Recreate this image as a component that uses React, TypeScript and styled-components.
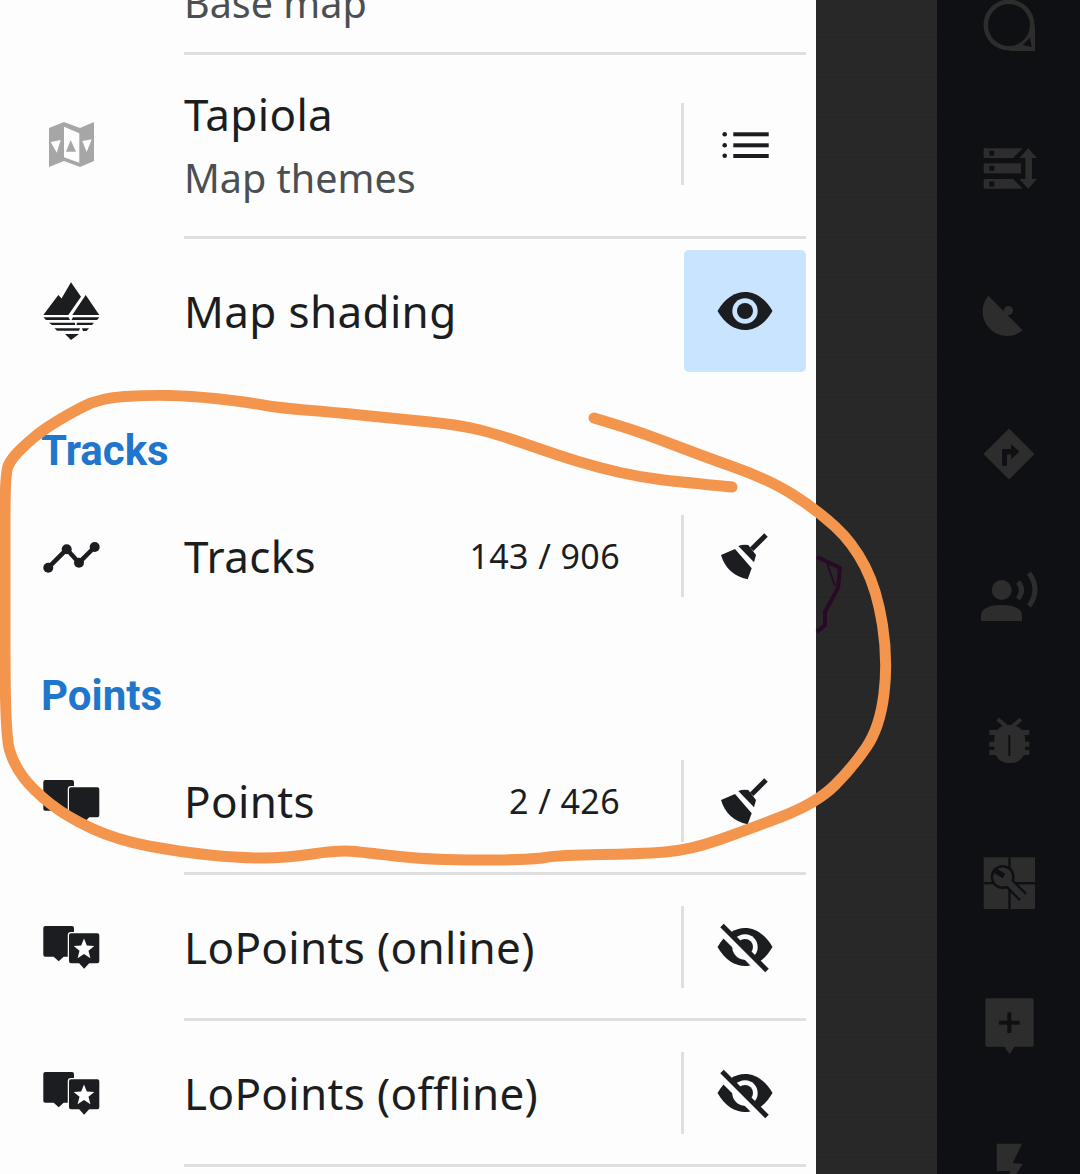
import React from 'react';
import styled, { createGlobalStyle } from 'styled-components';

const GlobalStyle = createGlobalStyle`
  html, body {
    margin: 0;
    padding: 0;
    background: #0e1013;
  }
`;

const Screen = styled.div`
  position: relative;
  display: flex;
  width: 1080px;
  height: 1174px;
  overflow: hidden;
  font-family: 'Noto Sans', sans-serif;
`;

const Panel = styled.div`
  display: flex;
  flex-direction: column;
  flex: none;
  width: 816px;
  background: #fdfdfd;
  color: #1b1d20;
`;

const MapStrip = styled.div`
  flex: none;
  width: 121px;
  background-color: #282828;
  background-image: linear-gradient(rgba(0, 0, 0, 0.08) 1px, transparent 1px);
  background-position: 0 37px;
  background-size: 100% 40px;
`;

const Rail = styled.div`
  display: flex;
  flex-direction: column;
  flex: 1;
  align-items: center;
  margin-top: -47px;
  background: #0e1013;
`;

const RailCell = styled.div`
  display: flex;
  flex: none;
  align-items: center;
  justify-content: center;
  height: 143px;
`;

const Row = styled.div<{ $height?: number }>`
  display: flex;
  flex: none;
  height: ${(p) => p.$height ?? 146}px;
`;

const TopRow = styled(Row)`
  margin-top: -5px;
`;

const IconCell = styled.div<{ $bottom?: number }>`
  display: flex;
  flex: none;
  align-items: center;
  justify-content: center;
  width: 144px;
  margin-right: 40px;
  padding-bottom: ${(p) => p.$bottom ?? 0}px;
`;

const Body = styled.div<{ $divider?: boolean; $bottom?: number; $end?: boolean }>`
  display: flex;
  flex: 1;
  align-items: ${(p) => (p.$end ? 'flex-end' : 'center')};
  margin-right: 10px;
  padding-bottom: ${(p) => p.$bottom ?? 2}px;
  box-shadow: ${(p) => (p.$divider ? 'inset 0 -3px 0 #dfdfdf' : 'none')};
`;

const TextBlock = styled.div`
  display: flex;
  flex: 1;
  flex-direction: column;
  min-width: 0;
`;

const TwoLines = styled(TextBlock)`
  padding-top: 4px;
`;

const Title = styled.div`
  font-size: 44px;
  line-height: 64px;
  letter-spacing: 0.35px;
  white-space: nowrap;
`;

const Sub = styled.div`
  color: #4b4f53;
  font-size: 39.5px;
  line-height: 64px;
  white-space: nowrap;
`;

const Count = styled.div`
  margin-right: 61px;
  font-size: 34px;
  line-height: 64px;
  letter-spacing: 0.4px;
  white-space: nowrap;
`;

const Separator = styled.div`
  flex: none;
  width: 3px;
  height: 82px;
  background: #dfdfdf;
`;

const ActionButton = styled.button<{ $active?: boolean }>`
  display: flex;
  flex: none;
  align-items: center;
  justify-content: center;
  width: 122px;
  height: 122px;
  padding: 0;
  border: none;
  border-radius: 5px;
  background: ${(p) => (p.$active ? '#c9e4fe' : 'transparent')};
`;

const SectionHeader = styled.div<{ $height: number }>`
  display: flex;
  flex: none;
  align-items: flex-end;
  height: ${(p) => p.$height}px;
  box-sizing: border-box;
  padding: 0 0 9px 41px;
  color: #1f76cc;
  font-family: 'Roboto', sans-serif;
  font-size: 42px;
  font-weight: 700;
  line-height: 48px;
`;

const Annotation = styled.svg`
  position: absolute;
  top: 0;
  left: 0;
  pointer-events: none;
`;

const INK = '#1b1d20';
const RAIL_INK = '#2d2d2d';
const RAIL_BG = '#0e1013';

const Icon: React.FC<{ children: React.ReactNode }> = ({ children }) => (
  <svg width={60} height={60} viewBox="0 0 60 60">
    {children}
  </svg>
);

const FoldedMapIcon = () => (
  <Icon>
    <g transform="translate(2 2)">
      <polygon points="5,12 20,6 36,12 50,6 50,45 36,51 20,45 5,51" fill="#a6a6a6" />
      <polygon points="20,10.7 35.3,17.3 35.3,46.7 20,41.3" fill="#fdfdfd" />
      <polygon points="26.7,24 22,35.7 32,35.7" fill="#a6a6a6" />
      <polygon points="6.7,26 16.7,24 12.7,36.7" fill="#fdfdfd" />
      <polygon points="38.3,25 47.7,23.3 42.7,36" fill="#fdfdfd" />
    </g>
  </Icon>
);

const ShadingIcon = () => (
  <Icon>
    <polygon points="1.3,34 16.3,14 19.5,17.5 29,1.3 39,15.7 26.3,34" fill={INK} />
    <polygon points="43.7,14 57.3,34 30.3,34" fill={INK} />
    <polygon points="1.5,36.3 26.5,36.3 28,39 4,39" fill={INK} />
    <polygon points="31,36.3 57.5,36.3 55,39 29.5,39" fill={INK} />
    <polygon points="7,41.7 33,41.7 33,44 10,44" fill={INK} />
    <polygon points="35,41.7 52,41.7 50,44 34.5,44" fill={INK} />
    <polygon points="12.5,47.3 38,47.3 37,49.8 15,49.8" fill={INK} />
    <polygon points="40,47.3 47,47.3 44.5,50 41,50" fill={INK} />
    <polygon points="23,53 37,53 29,59" fill={INK} />
  </Icon>
);

const TrackIcon = () => (
  <Icon>
    <polyline points="6.3,40.7 24.7,22.3 37,35.7 52.7,20" fill="none" stroke={INK} strokeWidth={4.5} />
    <circle cx={6.3} cy={40.7} r={5} fill={INK} />
    <circle cx={24.7} cy={22.3} r={5} fill={INK} />
    <circle cx={37} cy={35.7} r={5} fill={INK} />
    <circle cx={52.7} cy={20} r={5} fill={INK} />
  </Icon>
);

const markerPath = (x: number, y: number, w: number, h: number, tip: number) =>
  `M${x + 2} ${y}H${x + w - 2}Q${x + w} ${y} ${x + w} ${y + 2}V${y + h - 2}Q${x + w} ${y + h} ${x + w - 2} ${y + h}` +
  `H${x + w / 2 + 5}L${x + w / 2} ${y + h + tip}L${x + w / 2 - 5} ${y + h}H${x + 2}Q${x} ${y + h} ${x} ${y + h - 2}V${y + 2}Q${x} ${y} ${x + 2} ${y}Z`;

const PointsIcon: React.FC<{ star?: boolean }> = ({ star }) => (
  <Icon>
    <path d={markerPath(1.3, 8, 30.7, 30.7, 4.5)} fill={INK} />
    <path d={markerPath(27, 15.3, 30.3, 30, 5.5)} fill={INK} stroke="#fdfdfd" strokeWidth={2.5} paintOrder="stroke" />
    {star && (
      <polygon
        points="42,20.5 44.8,27.6 52.3,28 46.5,32.8 48.4,40.2 42,36 35.6,40.2 37.5,32.8 31.7,28 39.2,27.6"
        fill="#fdfdfd"
      />
    )}
  </Icon>
);

const BroomIcon = () => (
  <Icon>
    <g transform="translate(0 1)">
      <line x1={51} y1={8} x2={36.7} y2={22.3} stroke={INK} strokeWidth={5} />
      <path d="M23.3 19Q28 17 33.3 18L41 28L39 35.3Z" fill={INK} />
      <path d="M6 28L20 22L36.7 41.3L32.7 52.3Q12 48 6 28Z" fill={INK} />
    </g>
  </Icon>
);

const ListIcon = () => (
  <Icon>
    <circle cx={9.7} cy={20.2} r={2.3} fill={INK} />
    <circle cx={9.7} cy={31.2} r={2.3} fill={INK} />
    <circle cx={9.7} cy={41.8} r={2.3} fill={INK} />
    <rect x={18.3} y={18.3} width={35.4} height={4} fill={INK} />
    <rect x={18.3} y={29.3} width={35.4} height={4} fill={INK} />
    <rect x={18.3} y={40} width={35.4} height={4} fill={INK} />
  </Icon>
);

const EYE_PATH = 'M2.5 30C10 17 20 11 30 11S50 17 57.5 30C50 43 40 49 30 49S10 43 2.5 30Z';

const EyeIcon = () => (
  <Icon>
    <path d={EYE_PATH} fill={INK} />
    <circle cx={30} cy={30} r={12.7} fill="#c9e4fe" />
    <circle cx={30} cy={30} r={8} fill={INK} />
  </Icon>
);

const EyeOffIcon = () => (
  <Icon>
    <path d={EYE_PATH} fill={INK} />
    <circle cx={30} cy={30} r={12.7} fill="#fdfdfd" />
    <circle cx={30} cy={30} r={8} fill={INK} />
    <line x1={5} y1={11} x2={50} y2={56} stroke="#fdfdfd" strokeWidth={10} />
    <line x1={7} y1={8.5} x2={52} y2={53.5} stroke={INK} strokeWidth={5} />
  </Icon>
);

const BubbleIcon = () => (
  <Icon>
    <circle cx={30} cy={30} r={25.5} fill={RAIL_INK} />
    <polygon points="30,56 56,56 56,30" fill={RAIL_INK} />
    <circle cx={30} cy={30} r={21} fill={RAIL_BG} />
    <polygon points="43.7,50 51,42.6 52.7,52" fill={RAIL_BG} />
  </Icon>
);

const StackIcon = () => (
  <Icon>
    <polygon points="4.7,10.3 43.7,10.3 34,20 4.7,20" fill={RAIL_INK} />
    <rect x={4.7} y={25.3} width={37.3} height={10} fill={RAIL_INK} />
    <polygon points="4.7,41 34,41 43.7,50.7 4.7,50.7" fill={RAIL_INK} />
    <rect x={10.3} y={12.7} width={5} height={5} fill={RAIL_BG} />
    <rect x={10.3} y={27.8} width={5} height={5} fill={RAIL_BG} />
    <rect x={10.3} y={43.5} width={5} height={5} fill={RAIL_BG} />
    <polygon points="49.3,10.3 58,20 53,20 53,41 58,41 49.3,50.7 40.3,41 46.3,41 46.3,20 40.3,20" fill={RAIL_INK} />
  </Icon>
);

const DishIcon = () => (
  <Icon>
    <path d="M9.3 14.7L43.7 49.3A24.5 24.5 0 0 1 9.3 14.7Z" fill={RAIL_INK} />
    <circle cx={29.5} cy={29.5} r={4.5} fill={RAIL_INK} />
  </Icon>
);

const RouteIcon = () => (
  <Icon>
    <polygon points="30,4.5 55.5,30 30,55.5 4.5,30" fill={RAIL_INK} />
    <polygon points="23,41.7 23,25 32,25 32,20 40.3,27.7 32,35.3 32,30.5 28,30.5 28,41.7" fill={RAIL_BG} />
  </Icon>
);

const PersonIcon = () => (
  <Icon>
    <circle cx={22.7} cy={23} r={10} fill={RAIL_INK} />
    <path d="M2 54V48C2 41 12 38 22.7 38S43 41 43 48V54Z" fill={RAIL_INK} />
    <path d="M39 15Q46 23 39 32" fill="none" stroke={RAIL_INK} strokeWidth={5} />
    <path d="M50 6Q62 23 50 39" fill="none" stroke={RAIL_INK} strokeWidth={5} />
  </Icon>
);

const BugIcon = () => (
  <Icon>
    <rect x={15.3} y={15} width={30.7} height={38} rx={14} fill={RAIL_INK} />
    <path d="M18.7 9.3L27 16M42 9.3L33.7 16" fill="none" stroke={RAIL_INK} strokeWidth={4} />
    <rect x={10.3} y={20} width={40} height={5} fill={RAIL_INK} />
    <rect x={10.3} y={31.7} width={40} height={5} fill={RAIL_INK} />
    <rect x={10.3} y={40} width={40} height={5} fill={RAIL_INK} />
    <rect x={29.3} y={25} width={2} height={21} fill={RAIL_BG} />
  </Icon>
);

const WrenchIcon = () => (
  <Icon>
    <rect x={4.7} y={4.4} width={51.3} height={51.6} fill={RAIL_INK} />
    <rect x={29.3} y={4.4} width={2.4} height={51.6} fill={RAIL_BG} />
    <rect x={4.7} y={29} width={51.3} height={2.4} fill={RAIL_BG} />
    <circle cx={23.7} cy={24} r={12} fill={RAIL_BG} />
    <line x1={24} y1={24} x2={44} y2={44} stroke={RAIL_BG} strokeWidth={11} />
    <circle cx={23.7} cy={24} r={9.5} fill={RAIL_INK} />
    <line x1={24} y1={24} x2={44} y2={44} stroke={RAIL_INK} strokeWidth={6.5} />
    <line x1={15} y1={17} x2={25} y2={23} stroke={RAIL_BG} strokeWidth={5} />
  </Icon>
);

const MarkerPlusIcon = () => (
  <Icon>
    <path d={markerPath(6.3, 2.3, 48.4, 48.4, 7.6)} fill={RAIL_INK} />
    <rect x={20} y={24.7} width={20.6} height={4} fill={RAIL_BG} />
    <rect x={28.3} y={16.4} width={4} height={20.6} fill={RAIL_BG} />
  </Icon>
);

const BoltIcon = () => (
  <Icon>
    <polygon points="17.7,4.8 43,4.8 33.7,24 43.7,25 28,50 31,32 17.7,32" fill={RAIL_INK} />
  </Icon>
);

// turns a hand-traced list of points into a smooth stroke
const smooth = (pts: number[][]) => {
  let d = `M${pts[0][0]} ${pts[0][1]}`;
  for (let i = 1; i < pts.length - 1; i++) {
    const mx = (pts[i][0] + pts[i + 1][0]) / 2;
    const my = (pts[i][1] + pts[i + 1][1]) / 2;
    d += `Q${pts[i][0]} ${pts[i][1]} ${mx} ${my}`;
  }
  const last = pts[pts.length - 1];
  return `${d}L${last[0]} ${last[1]}`;
};

const SCRIBBLE = [
  [732, 487], [680, 482], [640, 477], [600, 468], [560, 456], [500, 435], [460, 425], [400, 419],
  [330, 412], [280, 408], [240, 401], [190, 396], [150, 395], [100, 398], [67, 415], [43, 430],
  [27, 443], [12, 458], [5, 472], [5, 560], [5, 735], [14, 765], [33, 790], [67, 817],
  [117, 840], [180, 852], [240, 858], [285, 858], [340, 850], [370, 853], [430, 860], [530, 860],
  [560, 855], [640, 854], [690, 850], [747, 830], [817, 803], [853, 767], [880, 727], [888, 660],
  [877, 590], [853, 543], [817, 510], [770, 480], [700, 455], [640, 432], [594, 418],
];

const railIcons = [
  BubbleIcon, StackIcon, DishIcon, RouteIcon, PersonIcon, BugIcon, WrenchIcon, MarkerPlusIcon, BoltIcon,
];

export default function App() {
  return (
    <>
      <GlobalStyle />
      <Screen>
        <Panel>
          <TopRow $height={60}>
            <IconCell />
            <Body $divider $end $bottom={20}>
              <Sub>Base map</Sub>
            </Body>
          </TopRow>
          <Row $height={184}>
            <IconCell $bottom={6}>
              <FoldedMapIcon />
            </IconCell>
            <Body $divider $bottom={6}>
              <TwoLines>
                <Title>Tapiola</Title>
                <Sub>Map themes</Sub>
              </TwoLines>
              <Separator />
              <ActionButton>
                <ListIcon />
              </ActionButton>
            </Body>
          </Row>
          <Row $height={144}>
            <IconCell>
              <ShadingIcon />
            </IconCell>
            <Body $bottom={0}>
              <TextBlock>
                <Title>Map shading</Title>
              </TextBlock>
              <ActionButton $active>
                <EyeIcon />
              </ActionButton>
            </Body>
          </Row>
          <SectionHeader $height={101}>Tracks</SectionHeader>
          <Row>
            <IconCell>
              <TrackIcon />
            </IconCell>
            <Body>
              <TextBlock>
                <Title>Tracks</Title>
              </TextBlock>
              <Count>143 / 906</Count>
              <Separator />
              <ActionButton>
                <BroomIcon />
              </ActionButton>
            </Body>
          </Row>
          <SectionHeader $height={99}>Points</SectionHeader>
          <Row>
            <IconCell>
              <PointsIcon />
            </IconCell>
            <Body $divider>
              <TextBlock>
                <Title>Points</Title>
              </TextBlock>
              <Count>2 / 426</Count>
              <Separator />
              <ActionButton>
                <BroomIcon />
              </ActionButton>
            </Body>
          </Row>
          <Row>
            <IconCell>
              <PointsIcon star />
            </IconCell>
            <Body $divider>
              <TextBlock>
                <Title>LoPoints (online)</Title>
              </TextBlock>
              <Separator />
              <ActionButton>
                <EyeOffIcon />
              </ActionButton>
            </Body>
          </Row>
          <Row>
            <IconCell>
              <PointsIcon star />
            </IconCell>
            <Body $divider>
              <TextBlock>
                <Title>LoPoints (offline)</Title>
              </TextBlock>
              <Separator />
              <ActionButton>
                <EyeOffIcon />
              </ActionButton>
            </Body>
          </Row>
        </Panel>
        <MapStrip />
        <Rail>
          {railIcons.map((RailIcon, i) => (
            <RailCell key={i}>
              <RailIcon />
            </RailCell>
          ))}
        </Rail>
        <Annotation width={1080} height={1174} viewBox="0 0 1080 1174">
          <polyline
            points="817,557 840,568 838,588 825,612 825,625 817,632"
            fill="none"
            stroke="#260a26"
            strokeWidth={4}
          />
          <path d="M827 563L835 586" fill="none" stroke="#260a26" strokeWidth={2} />
          <path
            d={smooth(SCRIBBLE)}
            fill="none"
            stroke="#f4954d"
            strokeWidth={11}
            strokeLinecap="round"
            strokeLinejoin="round"
          />
        </Annotation>
      </Screen>
    </>
  );
}
